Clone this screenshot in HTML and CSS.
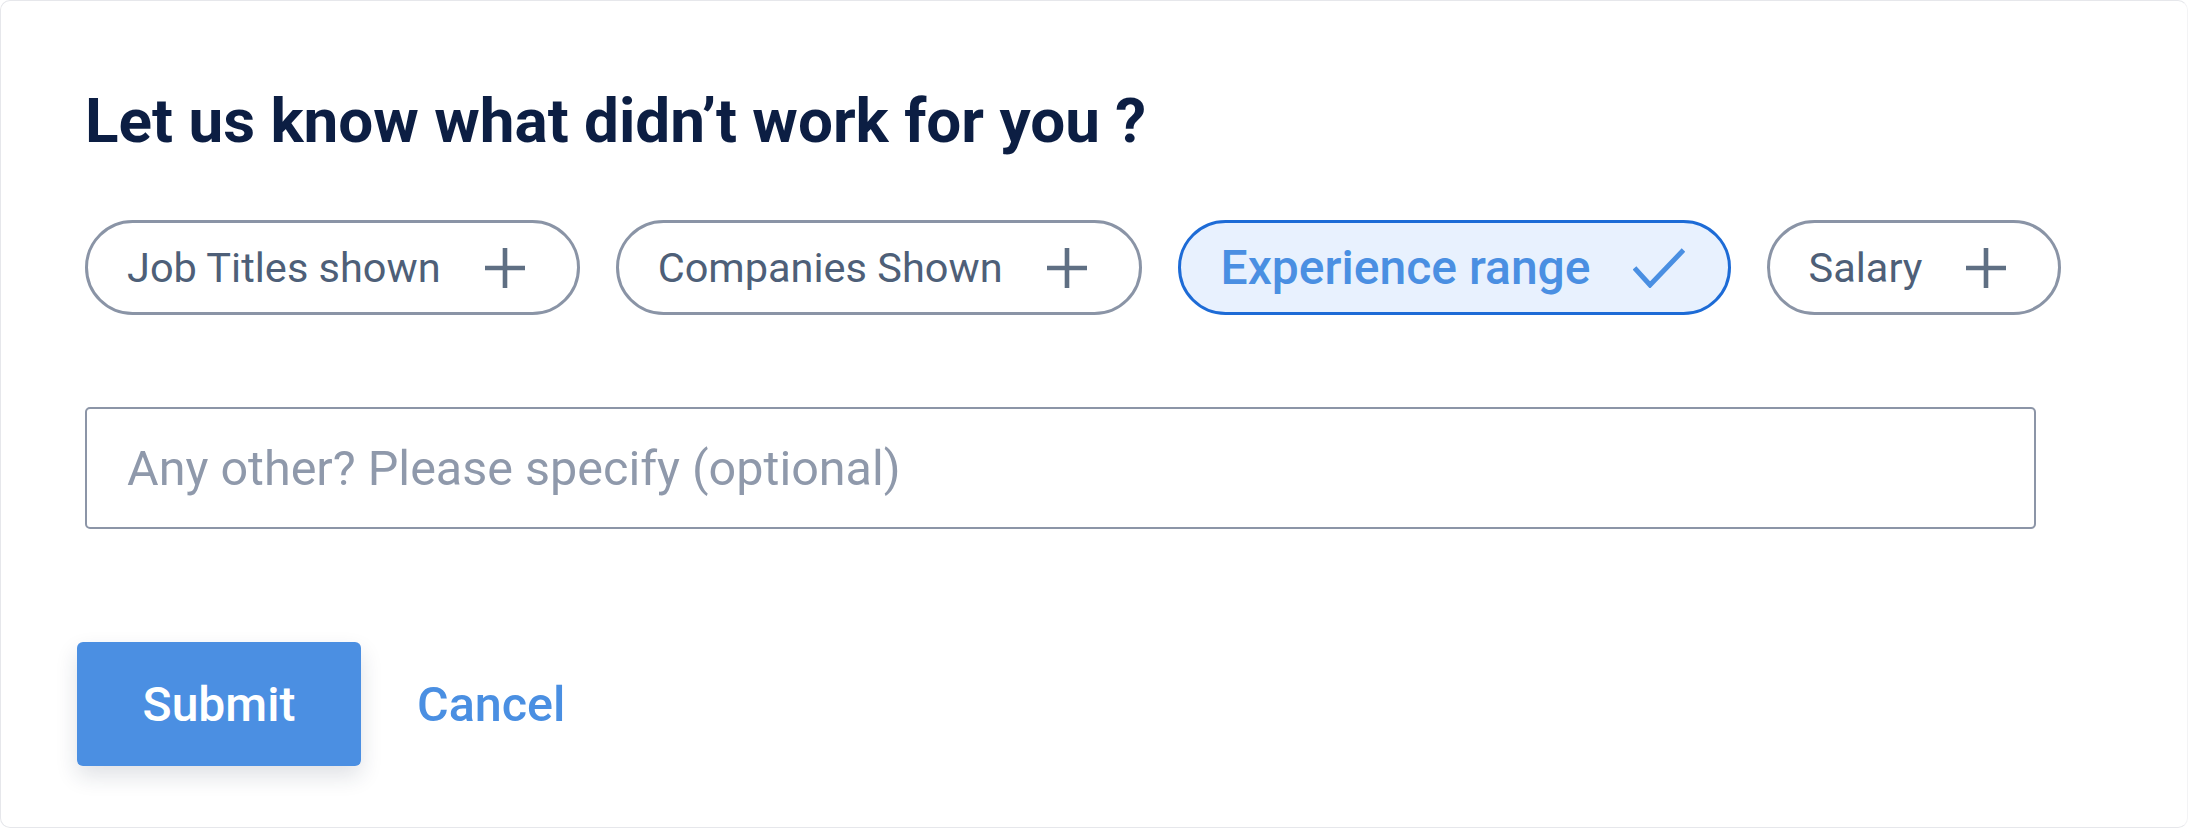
FILE: index.html
```html
<!DOCTYPE html>
<html lang="en">
<head>
<meta charset="utf-8">
<title>Feedback</title>
<link rel="stylesheet" href="styles.css">
</head>
<body>
<div class="card">
  <h1 class="title">Let us know what didn’t work for you ?</h1>
  <div class="chips">
    <button class="chip">
      <span class="chip-label">Job Titles shown</span>
      <svg class="icon-plus" viewBox="0 0 40 40" width="40" height="40"><path d="M20 0V40M0 20H40"/></svg>
    </button>
    <button class="chip">
      <span class="chip-label">Companies Shown</span>
      <svg class="icon-plus" viewBox="0 0 40 40" width="40" height="40"><path d="M20 0V40M0 20H40"/></svg>
    </button>
    <button class="chip chip-selected">
      <span class="chip-label">Experience range</span>
      <svg class="icon-check" viewBox="0 0 52 40" width="52" height="40"><path d="M1.5 20L17 37L50.5 2"/></svg>
    </button>
    <button class="chip">
      <span class="chip-label">Salary</span>
      <svg class="icon-plus" viewBox="0 0 40 40" width="40" height="40"><path d="M20 0V40M0 20H40"/></svg>
    </button>
  </div>
  <input class="other" type="text" placeholder="Any other? Please specify (optional)">
  <div class="actions">
    <button class="submit">Submit</button>
    <button class="cancel">Cancel</button>
  </div>
</div>
</body>
</html>
```
FILE: styles.css
```css
html, body {
  margin: 0;
  padding: 0;
  background: #ffffff;
}

body {
  font-family: Roboto, "Liberation Sans", Arial, sans-serif;
}

.card {
  box-sizing: border-box;
  width: 100%;
  height: 828px;
  border: 1px solid #e6e7eb;
  border-right-color: #f3f3f5;
  border-radius: 10px;
  background: #ffffff;
  padding: 82px 0 0 84px;
}

.title {
  margin: 0;
  font-size: 62px;
  line-height: 76px;
  font-weight: 700;
  color: #0c1e43;
}

.chips {
  display: flex;
  gap: 36px;
  margin-top: 61px;
}

.chip {
  box-sizing: border-box;
  display: flex;
  align-items: center;
  gap: 44px;
  height: 95px;
  padding: 0 52px 0 39px;
  border: 3px solid #8a94a6;
  border-radius: 48px;
  background: #ffffff;
  font-family: Roboto, "Liberation Sans", Arial, sans-serif;
  font-size: 41.5px;
  line-height: 50px;
  font-weight: 400;
  color: #4e5f78;
  cursor: pointer;
}

.chip-selected {
  border-color: #1d6bd6;
  background: #e8f1fe;
  color: #4a8fe2;
  font-size: 48px;
  font-weight: 500;
  gap: 42px;
  padding-right: 43px;
  padding-left: 40px;
}

.icon-plus {
  display: block;
  fill: none;
  stroke: #5f6f83;
  stroke-width: 4.6;
}

.icon-check {
  display: block;
  fill: none;
  stroke: #4a8fe2;
  stroke-width: 5;
}

.other {
  display: block;
  box-sizing: border-box;
  width: 1951px;
  height: 122px;
  margin-top: 92px;
  padding: 0 40px;
  border: 2.5px solid #8c95a7;
  border-radius: 5px;
  font-family: Roboto, "Liberation Sans", Arial, sans-serif;
  font-size: 48.5px;
  color: #2a3547;
  outline: none;
}

.other::placeholder {
  color: #8f99ab;
  opacity: 1;
}

.actions {
  display: flex;
  align-items: center;
  margin-top: 113px;
  margin-left: -8px;
}

.submit {
  width: 284px;
  height: 124px;
  border: none;
  border-radius: 6px;
  background: #4b8fe2;
  color: #ffffff;
  font-family: Roboto, "Liberation Sans", Arial, sans-serif;
  font-size: 48px;
  font-weight: 500;
  box-shadow: 0 10px 22px rgba(30, 45, 70, 0.14);
  cursor: pointer;
}

.cancel {
  margin-left: 56px;
  padding: 0;
  border: none;
  background: none;
  color: #4a8fe2;
  font-family: Roboto, "Liberation Sans", Arial, sans-serif;
  font-size: 48.5px;
  font-weight: 500;
  cursor: pointer;
}
```
